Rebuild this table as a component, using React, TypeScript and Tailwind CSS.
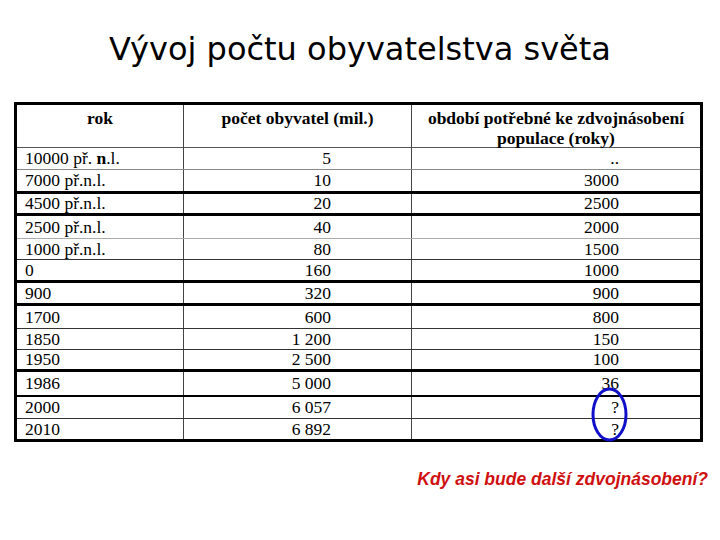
import React from "react";

type Line = "thin" | "gray" | "light" | "mid" | "thick" | "none";

type Row = {
  rok: React.ReactNode;
  pocet: string;
  obdobi: string;
  h: number;
  line: Line;
};

const LINE_CLASS: Record<Line, string> = {
  thin: "border-b border-[#333]",
  gray: "border-b border-[#888]",
  light: "border-b border-[#aaa]",
  mid: "border-b-2 border-black",
  thick: "border-b-[3px] border-black",
  none: "",
};

const LINE_W: Record<Line, number> = { thin: 1, gray: 1, light: 1, mid: 2, thick: 3, none: 0 };

const ROWS: Row[] = [
  {
    rok: (
      <span>
        10000 př. <b>n</b>.l.
      </span>
    ),
    pocet: "5",
    obdobi: "..",
    h: 21,
    line: "gray",
  },
  { rok: "7000 př.n.l.", pocet: "10", obdobi: "3000", h: 21, line: "thick" },
  { rok: "4500 př.n.l.", pocet: "20", obdobi: "2500", h: 19, line: "thick" },
  { rok: "2500 př.n.l.", pocet: "40", obdobi: "2000", h: 22, line: "light" },
  { rok: "1000 př.n.l.", pocet: "80", obdobi: "1500", h: 20, line: "thin" },
  { rok: "0", pocet: "160", obdobi: "1000", h: 20, line: "thick" },
  { rok: "900", pocet: "320", obdobi: "900", h: 20, line: "thick" },
  { rok: "1700", pocet: "600", obdobi: "800", h: 22, line: "thin" },
  { rok: "1850", pocet: "1 200", obdobi: "150", h: 20, line: "thin" },
  { rok: "1950", pocet: "2 500", obdobi: "100", h: 19, line: "thick" },
  { rok: "1986", pocet: "5 000", obdobi: "36", h: 23, line: "mid" },
  { rok: "2000", pocet: "6 057", obdobi: "?", h: 21, line: "thin" },
  { rok: "2010", pocet: "6 892", obdobi: "?", h: 20, line: "none" },
];

function DataRow({ row }: { row: Row }) {
  return (
    <div
      className={`grid grid-cols-[167px_228px_288px] ${LINE_CLASS[row.line]}`}
      style={{ height: row.h + LINE_W[row.line] }}
    >
      <div className="flex items-center border-r border-[#444] pl-[8px] pt-[1px]">{row.rok}</div>
      <div className="flex items-center justify-end border-r border-[#444] pr-[80px] pt-[1px]">{row.pocet}</div>
      <div className="flex items-center justify-end pr-[81px] pt-[1px]">{row.obdobi}</div>
    </div>
  );
}

export default function App() {
  return (
    <div className="relative h-[540px] w-[720px] overflow-hidden bg-white">
      <div className="flex h-[102px] justify-center pt-[30px]">
        <h1 className="font-['DejaVu_Sans',Verdana,sans-serif] text-[32px] leading-[38px] text-black">
          Vývoj počtu obyvatelstva světa
        </h1>
      </div>

      <div className="ml-[14px] w-[689px] border-[3px] border-black font-['Liberation_Serif','Times_New_Roman',serif] text-[17.5px] leading-none text-black">
        <div className="grid h-[43px] grid-cols-[167px_228px_288px] border-b border-[#555] font-bold leading-[20px]">
          <div className="border-r border-[#444] pt-[3px] text-center">rok</div>
          <div className="border-r border-[#444] pt-[3px] text-center">počet obyvatel (mil.)</div>
          <div className="pt-[3px] text-center">
            období potřebné ke zdvojnásobení
            <br />
            populace (roky)
          </div>
        </div>
        {ROWS.map((row, i) => (
          <DataRow key={i} row={row} />
        ))}
      </div>

      {/* blue circle around the question marks */}
      <svg className="absolute left-[590px] top-[386px]" width="40" height="58" viewBox="0 0 40 58">
        <ellipse cx="19.5" cy="28.5" rx="16.5" ry="25.5" fill="none" stroke="#1010c8" strokeWidth="3" />
      </svg>

      <div className="flex justify-end pr-[12px] pt-[26px]">
        <p className="font-['Liberation_Sans',Arial,sans-serif] text-[17.5px] font-bold italic leading-[22px] text-[#d01010]">
          Kdy asi bude další zdvojnásobení?
        </p>
      </div>
    </div>
  );
}
